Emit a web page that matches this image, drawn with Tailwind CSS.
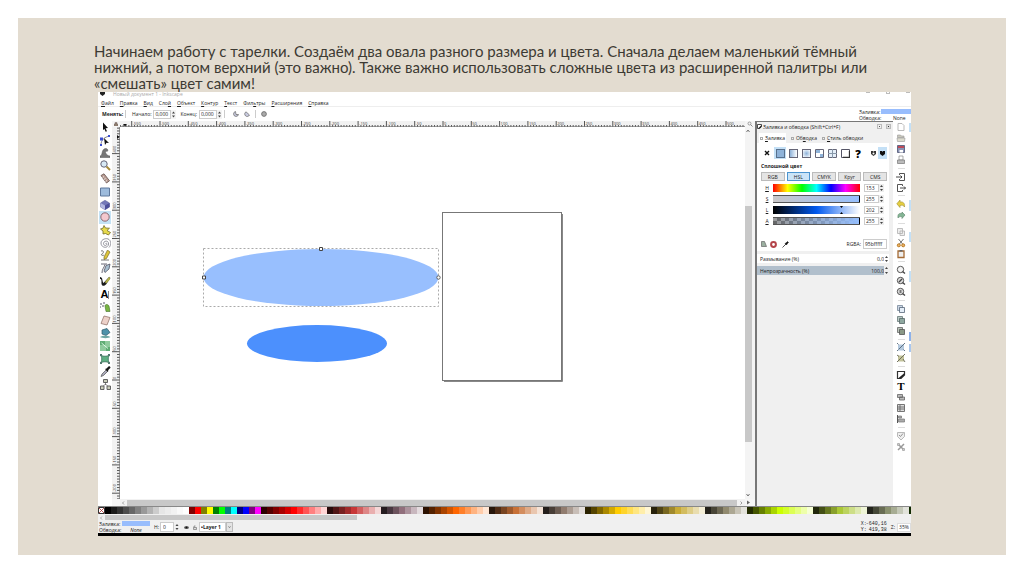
<!DOCTYPE html>
<html lang="ru">
    <head>
        <meta charset="UTF-8">
        <meta name="viewport" content="width=device-width, initial-scale=1.0">
        <title>Рисуем тарелку в Inkscape</title>
        <script src="https://cdn.jsdelivr.net/npm/@tailwindcss/browser@4"></script>
    </head>
    <body class="bg-white">
        <div class="flex min-h-screen p-[18px] pb-[19px]">
            <section class="flex min-w-0 flex-1 flex-col bg-[#e3dcd0] pt-[25px] pb-[19px] pl-20 pr-[95px]">

                <h1 class="-ml-1 mb-px whitespace-nowrap font-['Lato','Roboto',sans-serif] text-[15px] leading-[16px] text-[#3d3a33]">
                    Начинаем работу с тарелки. Создаём два овала разного размера и цвета. Сначала делаем маленький тёмный<br>
                    нижний, а потом верхний (это важно). Также важно использовать сложные цвета из расширенной палитры или<br>
                    «смешать» цвет самим!
                </h1>

                <!-- Inkscape window -->
                <div class="flex flex-1 flex-col overflow-hidden bg-white font-['Open_Sans','Noto_Sans',sans-serif] text-[5px] leading-[6px] text-[#1c1c1c]">

                    <!-- Title bar -->
                    <div class="flex h-[6px] items-start overflow-hidden pl-[2px] text-[#aaa]">
                        <svg class="mr-2 h-1 w-[5px]" viewBox="0 0 5 4"><path d="M0 0h5v2L2.500 4 0 2z" fill="#222"/></svg>
                        <span class="leading-[4px]">Новый документ 1 - Inkscape</span>
                        <div class="ml-auto flex gap-4 pr-px">
                            <span class="h-px w-1 bg-[#bbb]"></span>
                            <span class="h-[2px] w-1 border border-t-0 border-[#bbb]"></span>
                            <span class="h-px w-1 bg-[#bbb]"></span>
                        </div>
                    </div>

                    <!-- Menu -->
                    <nav class="flex h-[9px] items-center gap-[6px] border-b border-[#eee] pt-px pl-[3px]">
                        <a href="#"><u>Ф</u>айл</a>
                        <a href="#"><u>П</u>равка</a>
                        <a href="#"><u>В</u>ид</a>
                        <a href="#">Сло<u>й</u></a>
                        <a href="#"><u>О</u>бъект</a>
                        <a href="#"><u>К</u>онтур</a>
                        <a href="#"><u>Т</u>екст</a>
                        <a href="#">Фил<u>ь</u>тры</a>
                        <a href="#"><u>Р</u>асширения</a>
                        <a href="#"><u>С</u>правка</a>
                    </nav>

                    <!-- Tool options -->
                    <div class="flex h-[14px] items-center pl-1">
                        <b class="w-[23px]">Менять:</b>
                        <span class="mr-[6px] h-2 w-px bg-[#ccc]"></span>
                        <label for="start" class="mr-[2px]">Начало:</label>
                        <input id="start" value="0,000" class="h-[9px] w-[18px] border border-[#ccc] pl-px">
                        <svg class="mr-1 h-[9px] w-[5px] bg-[#f4f4f4]" viewBox="0 0 5 9"><path d="M1 3.500 2.500 1.500 4 3.500zM1 5.500 2.500 7.500 4 5.500z" fill="#444"/></svg>
                        <label for="end" class="mr-[2px]">Конец:</label>
                        <input id="end" value="0,000" class="h-[9px] w-[18px] border border-[#ccc] pl-px">
                        <svg class="mr-[2px] h-[9px] w-[5px] bg-[#f4f4f4]" viewBox="0 0 5 9"><path d="M1 3.500 2.500 1.500 4 3.500zM1 5.500 2.500 7.500 4 5.500z" fill="#444"/></svg>
                        <span class="mr-2 h-2 w-px bg-[#ccc]"></span>
                        <button class="mr-[5px]" aria-label="Сектор"><svg class="size-[6px]" viewBox="0 0 6 6"><path d="M2.500.5A2.500 2.500 0 1 0 5.500 3.500H3z" fill="#c9cbe0" stroke="#666" stroke-width=".7"/></svg></button>
                        <button class="mr-[5px]" aria-label="Дуга"><svg class="size-[6px]" viewBox="0 0 6 6"><path d="M2 .8A2.500 2.500 0 1 0 5.500 4z" fill="#c9cbe0" stroke="#666" stroke-width=".7"/></svg></button>
                        <span class="mr-[5px] h-2 w-px bg-[#ccc]"></span>
                        <button aria-label="Целый эллипс"><svg class="size-[6px]" viewBox="0 0 6 6"><circle cx="3" cy="3" r="2.400" fill="#aaa" stroke="#666" stroke-width=".8"/></svg></button>
                        <div class="ml-auto grid grid-cols-[22px_30px] pt-px">
                            <span>Заливка:</span><span class="h-[5px] bg-[#98bdfd]"></span>
                            <span>Обводка:</span><span class="pl-3">None</span>
                        </div>
                    </div>

                    <div class="flex flex-1">

                        <!-- Toolbox -->
                        <div class="w-[14px]">
                            <div class="grid h-[270px] auto-rows-fr justify-items-center *:flex *:w-[12px] *:items-center *:justify-center">
                                <button aria-label="Выделение"><svg class="size-[10px]" viewBox="0 0 10 10"><path d="M3 .5 8 6 5.600 6.200 7 9.200 5.600 9.700 4.500 6.900 3 8z" fill="#111"/></svg></button>
                                <button aria-label="Узлы"><svg class="size-[11px]" viewBox="0 0 11 11"><path d="M1 10C1 5 4 2 10 1" fill="none" stroke="#667" stroke-width=".8"/><path d="M0 2.500h3v3H0zM8 0h2v2H8zM0 9h2v2H0z" fill="#3c4fd0"/><path d="M4 3l5 5-2.500-.2L5 10z" fill="#111"/></svg></button>
                                <button aria-label="Корректор"><svg class="size-[10px]" viewBox="0 0 10 10"><path d="M0 9.500V8c3 0 1-7 5.500-7.500C8 .5 8.500 3 7 3.500 5.500 2.500 5 4 6 5.500S8 8 10 8v1.500z" fill="#777" stroke="#555" stroke-width=".5"/></svg></button>
                                <button aria-label="Масштаб"><svg class="size-[11px]" viewBox="0 0 11 11"><path d="M6.500 6.500 10 10" stroke="#a88c3a" stroke-width="2"/><circle cx="4" cy="4" r="3.200" fill="#d7e9f5" stroke="#667" stroke-width="1"/></svg></button>
                                <button aria-label="Измеритель"><svg class="size-[11px]" viewBox="0 0 11 11"><path d="M1 2.500 4 .8l5.500 7L6.500 10z" fill="#b99c92" stroke="#65514d" stroke-width=".8"/><path d="M2.500 4.500 4 3.500M4 6.500l1.500-1M5.500 8.500 7 7.500" stroke="#fff" stroke-width=".7"/></svg></button>
                                <button aria-label="Прямоугольник"><svg class="size-[10px]" viewBox="0 0 10 10"><path d="M.5 1h9v8h-9z" fill="#9dbbdc" stroke="#5f789c"/></svg></button>
                                <button aria-label="Параллелепипед"><svg class="size-[10px]" viewBox="0 0 10 10"><path d="M5 .3 9.500 3v4L5 9.700.5 7V3z" fill="#7478b8" stroke="#6a6d9e" stroke-width=".6"/><path d="M.5 3 5 5.500v4.200L.5 7z" fill="#b4b8e0"/><path d="M5 5.500 9.500 3v4L5 9.700z" fill="#4d4f9a"/></svg></button>
                                <button aria-label="Эллипс" class="bg-[#c4e2f5]"><svg class="size-[10px]" viewBox="0 0 10 10"><circle cx="5" cy="5" r="4.200" fill="#f3c8ce" stroke="#7e6068" stroke-width=".9"/></svg></button>
                                <button aria-label="Звезда"><svg class="size-[11px]" viewBox="0 0 11 11"><path d="M4 .5 5.500 3l4 .2L7 5.500l3.500 2-2 2.500-3-1.500L3 9V6L.5 4 3 3.200z" fill="#e6d94b" stroke="#746c27" stroke-width=".8"/></svg></button>
                                <button aria-label="Спираль"><svg class="size-[11px]" viewBox="0 0 11 11"><path d="M5.500 5.500c1-1 2 .5 1 1.500S3.500 7.500 3.500 5.500 6 2.500 7.500 3.500s1.500 4-.5 5.300-6 0-6-3.800S6.500-.5 9 1.500s2 6 0 8" fill="none" stroke="#7c7c88" stroke-width=".8"/></svg></button>
                                <button aria-label="Карандаш"><svg class="size-[11px]" viewBox="0 0 11 11"><path d="M1 1c3-1 3 2 1 3s1 2 2 1M1 10h8" fill="none" stroke="#555" stroke-width=".8"/><path d="M7.500 0 10 2 6.500 8.500 4 9.500V7z" fill="#dcc43c" stroke="#6a5d22" stroke-width=".6"/></svg></button>
                                <button aria-label="Перо"><svg class="size-[11px]" viewBox="0 0 11 11"><path d="M1 1h6M2 10C2 6 4 5 5 1.500" fill="none" stroke="#445" stroke-width=".8"/><path d="M6 2.500 10 1 9 6 5 9.500 4 8z" fill="#a8bfd0" stroke="#445" stroke-width=".7"/></svg></button>
                                <button aria-label="Каллиграфия"><svg class="size-[11px]" viewBox="0 0 11 11"><path d="M0 1c3 0 2 4 3.500 6L9 1l1.500 1L6 8.500C3 11.500 1 9 1.500 6 1.500 3.500 1 3 0 3z" fill="#1c1c1c"/><path d="M9.500.5 5 6l1 1.500 4-4z" fill="#b8b64c"/></svg></button>
                                <button aria-label="Текст" class="font-['Liberation_Sans',sans-serif] text-[11px] font-bold leading-[11px] text-black">A<span class="h-2 w-px bg-[#888]"></span></button>
                                <button aria-label="Распылитель"><svg class="size-[11px]" viewBox="0 0 11 11"><path d="M0 2h2M2 4h2M3 1h2M0 5h1" stroke="#556" stroke-width="1"/><path d="M5 4c0-2 3-2 4 0l1 5.500H6z" fill="#79b443" stroke="#44702b" stroke-width=".6"/></svg></button>
                                <button aria-label="Ластик"><svg class="size-[11px]" viewBox="0 0 11 11"><path d="M4 1 10 2.500 7 10 1 8.500z" fill="#edd1c9" stroke="#96776f" stroke-width=".8"/></svg></button>
                                <button aria-label="Заливка"><svg class="size-[11px]" viewBox="0 0 11 11"><path d="M2 2 7 .5l3 4L6 7.500 2 6z" fill="#4e92aa" stroke="#31596a" stroke-width=".7"/><path d="M0 9c3-2 8-1.500 10.500 0-2 1.500-8 1.500-10.500 0z" fill="#6fa7a4"/></svg></button>
                                <button aria-label="Градиент"><svg class="size-[10px]" viewBox="0 0 10 10"><path d="M0 0h10v10H0z" fill="#8fca9d"/><path d="M0 0h5v4H0zM6 6h4v4H6z" fill="#5fac74"/><path d="M1.500 2 8 7.500" stroke="#eafff0" stroke-width=".9"/></svg></button>
                                <button aria-label="Сетка градиента"><svg class="size-[10px]" viewBox="0 0 10 10"><path d="M1 1.500c3 1 5 1 8 0-1 3-1 4 0 7-3-1-5-1-8 0 1-3 1-4 0-7z" fill="#5fb083" stroke="#3e725c" stroke-width=".8"/><path d="M0 0h2v2H0zM8 0h2v2H8zM0 8h2v2H0zM8 8h2v2H8z" fill="#557a70"/></svg></button>
                                <button aria-label="Пипетка"><svg class="size-[11px]" viewBox="0 0 11 11"><path d="M1 10.500 2 8l4-4 1.500 1.500-4 4z" fill="#aab" stroke="#555" stroke-width=".7"/><path d="M5 3l1.500-.5L8.500.5c1-.8 2.500.6 1.800 1.600l-2 2L8 6z" fill="#151515"/></svg></button>
                                <button aria-label="Соединительные линии"><svg class="size-[11px]" viewBox="0 0 11 11"><path d="M5.500 3v3M2.500 8 5.500 5l3 3" fill="none" stroke="#666" stroke-width=".8"/><path d="M3.500.5h4v3h-4zM.5 7h3.500v3.500H.5zM7 7h3.500v3.500H7z" fill="#c9cdb8" stroke="#555" stroke-width=".9"/></svg></button>
                            </div>
                        </div>

                        <!-- Rulers, canvas, scrollbars -->
                        <div class="grid flex-1 grid-cols-[8px_1fr_10px] grid-rows-[6px_1fr_7px]">
                            <div class="flex items-center justify-center bg-[#f6f6f6]"><svg class="size-1" viewBox="0 0 4 4"><path d="M0 2h4v2H0zM1 2V.5h2V2" fill="#987" stroke="#655" stroke-width=".4"/></svg></div>
                            <svg class="h-[6px] w-full bg-[#f2f2f2]" id="ruler-x"></svg>
                            <div class="flex justify-center bg-[#f6f6f6]"><svg class="size-[6px]" viewBox="0 0 6 6"><circle cx="2.500" cy="2.500" r="1.500" fill="none" stroke="#888" stroke-width=".8"/><path d="M3.500 3.500l2 2" stroke="#888"/></svg></div>

                            <svg class="h-full w-[8px] bg-[#f2f2f2]" id="ruler-y"></svg>
                            <svg class="h-full w-full">
                                <path d="M324 254.500h118.500V87" fill="none" stroke="#888"/>
                                <rect x="322.500" y="85.500" width="119" height="168" fill="#fff" stroke="#777"/>
                                <ellipse cx="201" cy="150.500" rx="117.500" ry="28.500" fill="#98bffe"/>
                                <ellipse cx="197" cy="216.500" rx="70" ry="18.500" fill="#4c90fd"/>
                                <rect x="83.500" y="121.500" width="235" height="58" fill="none" stroke="#aaa" stroke-dasharray="2 2"/>
                                <path d="M199.500 120.500h3v3h-3zM82.500 149h3v3h-3z" fill="#fff" stroke="#444"/>
                                <circle cx="318.500" cy="150.500" r="1.700" fill="#fff" stroke="#444" stroke-width=".8"/>
                            </svg>
                            <div class="flex flex-col items-start bg-[#f4f4f4]">
                                <svg class="h-2 w-[6px]" viewBox="0 0 6 8"><path d="M1.500 5 3 3l1.500 2" fill="none" stroke="#666" stroke-width=".9"/></svg>
                                <div class="mt-[71px] h-[236px] w-[7px] bg-[#c8c8c8]"></div>
                                <svg class="mt-auto h-2 w-[6px]" viewBox="0 0 6 8"><path d="M1.500 3 3 5l1.500-2" fill="none" stroke="#666" stroke-width=".9"/></svg>
                            </div>

                            <div class="bg-[#f6f6f6]"></div>
                            <div class="flex items-center bg-[#f2f2f2]">
                                <svg class="h-[6px] w-[7px]" viewBox="0 0 7 6"><path d="M4 1.500 2.500 3 4 4.500" fill="none" stroke="#888" stroke-width=".8"/></svg>
                                <div class="h-[6px] flex-1 bg-[#c8c8c8]"></div>
                                <svg class="h-[6px] w-[8px]" viewBox="0 0 8 6"><path d="M3.500 1.500 5 3 3.500 4.500" fill="none" stroke="#888" stroke-width=".8"/></svg>
                            </div>
                            <div class="flex items-center bg-[#f6f6f6] pl-px"><svg class="size-[5px]" viewBox="0 0 5 5"><path d="M1 .5 4 2.500 1 4.500z" fill="#666"/></svg></div>
                        </div>

                        <!-- Fill and stroke dialog -->
                        <div class="w-[138px] border-t border-l-2 border-[#777] bg-[#f0f0f0]">
                            <div class="flex h-[9px] items-center pr-[2px]">
                                <svg class="mr-px size-[5px]" viewBox="0 0 5 5"><path d="M.5.5h4v2l-2 2h-2z" fill="#fff" stroke="#222" stroke-width=".8"/><path d="M4.500 1v2L3 4.500H1z" fill="#222"/></svg>
                                <span>Заливка и обводка (Shift+Ctrl+F)</span>
                                <button class="ml-auto mr-1 flex size-[5px] items-center justify-center border border-[#bbb]" aria-label="Свернуть"><span class="size-px bg-[#555]"></span></button>
                                <button class="flex size-[5px] items-center justify-center border border-[#bbb] bg-[#ddd]" aria-label="Закрыть"><span class="size-px bg-[#333]"></span></button>
                            </div>

                            <div class="mt-[2px] flex h-[10px] items-center gap-[5px] pl-[2px]">
                                <button class="flex h-full items-center gap-[2px] bg-white px-px"><span class="size-[3px] border border-[#aaa]"></span><span><u>З</u>аливка</span></button>
                                <button class="flex items-center gap-[2px]"><span class="size-[3px] border border-[#aaa]"></span><span>Об<u>в</u>одка</span></button>
                                <button class="flex items-center gap-[2px]"><span class="size-[3px] border border-[#aaa]"></span><span><u>С</u>тиль обводки</span></button>
                            </div>

                            <div class="mr-1 bg-white pb-[2px] pl-1 pr-[2px]">
                                <div class="flex h-[20px] items-center">
                                    <div class="flex items-center gap-px *:flex *:h-[12px] *:w-[12px] *:items-center *:justify-center">
                                        <button aria-label="Нет заливки"><svg class="size-[6px]" viewBox="0 0 6 6"><path d="M1 1l4 4M5 1 1 5" stroke="#111" stroke-width="1.400"/></svg></button>
                                        <button aria-label="Сплошной цвет" class="bg-[#c4e0f6]"><span class="size-[9px] border border-[#58708c] bg-[#8fb3d9]"></span></button>
                                        <button aria-label="Линейный градиент"><span class="size-[9px] border border-[#667] bg-linear-to-r from-[#8fb3d9] to-white"></span></button>
                                        <button aria-label="Радиальный градиент"><span class="size-[9px] border border-[#667] bg-radial from-[#8fb3d9] to-white"></span></button>
                                        <button aria-label="Сетка"><svg class="size-[9px]" viewBox="0 0 9 9"><path d="M.5.5h8v8h-8z" fill="#fff" stroke="#667"/><path d="M1 1h4v3H1zM5 5h3v3H5z" fill="#8fb3d9"/></svg></button>
                                        <button aria-label="Текстура"><svg class="size-[9px]" viewBox="0 0 9 9"><path d="M.5.5h8v8h-8z" fill="#e5eff9" stroke="#667"/><path d="M4.500 0v9M0 4.500h9" stroke="#89a"/></svg></button>
                                        <button aria-label="Образец"><svg class="size-[9px]" viewBox="0 0 9 9"><path d="M.5.5h8v8h-8z" fill="#fff" stroke="#556"/><path d="M8.500 2v6.500H2" fill="none" stroke="#333" stroke-width="1.300"/></svg></button>
                                        <button aria-label="Не определено" class="text-[11px] font-extrabold leading-[11px] text-black">?</button>
                                    </div>
                                    <div class="ml-auto flex items-center *:flex *:h-[12px] *:w-[9px] *:items-center *:justify-center">
                                        <button aria-label="Чёт-нечет"><svg class="size-[5px]" viewBox="0 0 5 5"><path d="M0 0h2l.5 1L3 0h2v3L2.500 5 0 3z" fill="#333"/><circle cx="2.500" cy="2.500" r="1" fill="#fff"/></svg></button>
                                        <button aria-label="Ненулевое" class="bg-[#c4e0f6]"><svg class="size-[5px]" viewBox="0 0 5 5"><path d="M0 0h2l.5 1L3 0h2v3L2.500 5 0 3z" fill="#111"/></svg></button>
                                    </div>
                                </div>
                                <b class="mb-[3px] block">Сплошной цвет</b>
                                <div class="mb-[3px] grid grid-cols-5 gap-[2px] *:h-[9px] *:border *:border-[#bbb] *:bg-[#e4e4e4]">
                                    <button>RGB</button>
                                    <button class="border-[#4b94cf]! bg-[#cbe4f7]!">HSL</button>
                                    <button>CMYK</button>
                                    <button>Круг</button>
                                    <button>CMS</button>
                                </div>

                                <div class="grid grid-cols-[12px_1fr_20px] items-center gap-y-[3px] pr-[3px]">
                                    <label for="h" class="text-center"><u>H</u></label>
                                    <div class="mr-1 h-2 bg-[linear-gradient(to_right,#f00,#ff0,#0f0,#0ff,#00f,#f0f,#f00)]"></div>
                                    <div class="flex h-2"><input id="h" value="153" class="h-2 w-[15px] border border-[#ccc] pl-px leading-[6px]"><svg class="h-2 w-[5px] bg-[#eee]" viewBox="0 0 5 8"><path d="M1 3 2.500 1 4 3zM1 5 2.500 7 4 5z" fill="#444"/></svg></div>

                                    <label for="s" class="text-center"><u>S</u></label>
                                    <div class="mr-1 flex h-2 justify-end border-y border-[#555] bg-linear-to-r from-[#cac7c7] to-[#95bfff]"><span class="w-px bg-black"></span></div>
                                    <div class="flex h-2"><input id="s" value="255" class="h-2 w-[15px] border border-[#ccc] pl-px leading-[6px]"><svg class="h-2 w-[5px] bg-[#eee]" viewBox="0 0 5 8"><path d="M1 3 2.500 1 4 3zM1 5 2.500 7 4 5z" fill="#444"/></svg></div>

                                    <label for="l" class="text-center"><u>L</u></label>
                                    <div class="mr-1 flex h-2 justify-end bg-[linear-gradient(to_right,#000,#0058ee_50%,#fff)] pr-[17px]"><svg class="h-2 w-[3px]" viewBox="0 0 3 8"><path d="M0 0h3L1.500 2zM0 8h3L1.500 6z" fill="#000"/></svg></div>
                                    <div class="flex h-2"><input id="l" value="202" class="h-2 w-[15px] border border-[#ccc] pl-px leading-[6px]"><svg class="h-2 w-[5px] bg-[#eee]" viewBox="0 0 5 8"><path d="M1 3 2.500 1 4 3zM1 5 2.500 7 4 5z" fill="#444"/></svg></div>

                                    <label for="a" class="text-center"><u>A</u></label>
                                    <div class="mr-1 h-2 bg-[conic-gradient(#666_25%,#999_0_50%,#666_0_75%,#999_0)] bg-size-[8px_8px]"><div class="flex h-2 justify-end border-y border-[#555] bg-linear-to-r from-transparent to-[#95bfff]"><span class="w-px bg-black"></span></div></div>
                                    <div class="flex h-2"><input id="a" value="255" class="h-2 w-[15px] border border-[#ccc] pl-px leading-[6px]"><svg class="h-2 w-[5px] bg-[#eee]" viewBox="0 0 5 8"><path d="M1 3 2.500 1 4 3zM1 5 2.500 7 4 5z" fill="#444"/></svg></div>
                                </div>

                                <div class="mt-[14px] flex items-center">
                                    <svg class="mr-[3px] size-[6px]" viewBox="0 0 6 6"><path d="M.5.5h3l2 5h-5z" fill="#9bb0a0" stroke="#666" stroke-width=".7"/></svg>
                                    <svg class="mr-[5px] size-[7px]" viewBox="0 0 7 7"><circle cx="3.500" cy="3.500" r="2.400" fill="#fff" stroke="#b34449" stroke-width="2"/></svg>
                                    <button aria-label="Пипетка"><svg class="size-[7px]" viewBox="0 0 7 7"><path d="M.5 6.500 4 3" stroke="#555"/><path d="M3 2.500 4 2 5.500.5l1 1L5 3l-.5 1z" fill="#111" stroke="#111" stroke-width=".5"/></svg></button>
                                    <label for="rgba" class="ml-auto mr-[2px]">RGBA:</label>
                                    <input id="rgba" value="95bfffff" class="h-[10px] w-[24px] border border-[#ccc] pl-px">
                                </div>
                            </div>

                            <div class="mt-[3px] mr-1 flex h-[9px] items-center bg-white pl-[3px]">
                                <label for="blur">Размывание (%)</label>
                                <input id="blur" value="0,0" class="ml-auto w-4 text-right leading-[6px]">
                                <svg class="h-2 w-[5px]" viewBox="0 0 5 8"><path d="M1 3 2.500 1 4 3zM1 5 2.500 7 4 5z" fill="#444"/></svg>
                            </div>
                            <div class="mt-[3px] mr-1 flex h-[9px] items-center bg-[#b1bfcc] pl-[3px]">
                                <label for="opacity">Непрозрачность (%)</label>
                                <input id="opacity" value="100,0" class="ml-auto w-4 text-right leading-[6px]">
                                <svg class="h-[9px] w-[5px] bg-[#f0f0f0]" viewBox="0 0 5 9"><path d="M1 3 2.500 1 4 3zM1 6 2.500 8 4 6z" fill="#444"/></svg>
                            </div>
                        </div>

                        <!-- Commands bar -->
                        <div class="relative w-[18px]">
                            <div class="flex h-[331px] flex-col items-center justify-between pr-[2px] pt-px *:shrink-0">
                                <button aria-label="Создать"><svg class="size-[10px]" viewBox="0 0 10 10"><path d="M2 1.500h4L8 3.500v5H2z" fill="#fff" stroke="#aaa" stroke-width=".8"/></svg></button>
                                <button aria-label="Открыть"><svg class="size-[10px]" viewBox="0 0 10 10"><path d="M1.500 2h3l1 1H8v1.500H1.500z" fill="#c9c8bc" stroke="#999" stroke-width=".6"/><path d="M1 5h8l-.5 3.500H1.500z" fill="#dddccf" stroke="#999" stroke-width=".6"/></svg></button>
                                <button aria-label="Сохранить"><svg class="size-[10px]" viewBox="0 0 10 10"><path d="M1.500 1.500h7v7h-7z" fill="#8a94b5" stroke="#4b5270" stroke-width=".8"/><path d="M2 2h6v2H2z" fill="#bc4b59"/><path d="M3.500 6h3.500v2.500H3.500z" fill="#fff"/></svg></button>
                                <button aria-label="Печать"><svg class="size-[10px]" viewBox="0 0 10 10"><path d="M3 1h4v4H3z" fill="#fff" stroke="#888" stroke-width=".7"/><path d="M1.500 5h7v3.500h-7z" fill="#bbb" stroke="#777" stroke-width=".7"/></svg></button>
                                <span class="flex h-1 w-[7px] items-center"><span class="h-px w-full bg-[#ddd]"></span></span>
                                <button aria-label="Импорт"><svg class="size-[10px]" viewBox="0 0 10 10"><path d="M3.500 3V1.500h5v7h-5V7" fill="none" stroke="#555"/><path d="M0 5h6M4.500 3.500 6 5 4.500 6.500" fill="none" stroke="#333" stroke-width=".9"/></svg></button>
                                <button aria-label="Экспорт"><svg class="size-[10px]" viewBox="0 0 10 10"><path d="M6.500 3V1.500h-5v7h5V7" fill="none" stroke="#555"/><path d="M4 5h5.500M8 3.500 9.500 5 8 6.500" fill="none" stroke="#333" stroke-width=".9"/></svg></button>
                                <span class="flex h-1 w-[7px] items-center"><span class="h-px w-full bg-[#ddd]"></span></span>
                                <button aria-label="Отменить"><svg class="size-[10px]" viewBox="0 0 10 10"><path d="M4 1v2c3-.5 5 1 4.500 5C7.500 6 6 6 4 6.500V8.500L.8 4.800z" fill="#e5cf42" stroke="#a08d2a" stroke-width=".6"/></svg></button>
                                <button aria-label="Повторить"><svg class="size-[10px]" viewBox="0 0 10 10"><path d="M6 2v1.500C3 3 1.500 4 2 8c1-1.500 2.500-1.500 4-1.300V8.500L9 5z" fill="#83b594" stroke="#598168" stroke-width=".6"/></svg></button>
                                <span class="flex h-1 w-[7px] items-center"><span class="h-px w-full bg-[#ddd]"></span></span>
                                <button aria-label="Скопировать"><svg class="size-[10px]" viewBox="0 0 10 10"><path d="M1.500 1.500h5v5h-5zM4 4h4.500v4.500H4z" fill="#eee" stroke="#b0b0b0" stroke-width=".8"/></svg></button>
                                <button aria-label="Вырезать"><svg class="size-[10px]" viewBox="0 0 10 10"><path d="M2.500 1 7 6.500M7.500 1 3 6.500" stroke="#666" stroke-width=".9"/><circle cx="2.800" cy="7.300" r="1.500" fill="#edb467" stroke="#b97c28"/><circle cx="7.200" cy="7.300" r="1.500" fill="#edb467" stroke="#b97c28"/></svg></button>
                                <button aria-label="Вставить"><svg class="size-[10px]" viewBox="0 0 10 10"><path d="M2 2h6v6.500H2z" fill="#eee" stroke="#a56b35" stroke-width="1.300"/><path d="M3.500 1h3v1.500h-3z" fill="#666"/></svg></button>
                                <span class="flex h-1 w-[7px] items-center"><span class="h-px w-full bg-[#ddd]"></span></span>
                                <button aria-label="Выделение в окне"><svg class="size-[10px]" viewBox="0 0 10 10"><circle cx="4.500" cy="4.500" r="3.200" fill="#f4f4f4" stroke="#555"/><path d="M6.500 6.500 9 8.500" stroke="#444" stroke-width="1.500"/></svg></button>
                                <button aria-label="Рисунок в окне"><svg class="size-[10px]" viewBox="0 0 10 10"><circle cx="4.500" cy="4.500" r="3.200" fill="#ddd" stroke="#555"/><path d="M3 6l3-3M6.500 6.500 9 8.500" stroke="#444" stroke-width="1.400"/></svg></button>
                                <button aria-label="Страница в окне"><svg class="size-[10px]" viewBox="0 0 10 10"><circle cx="4.500" cy="4.500" r="3.200" fill="#ddd" stroke="#555"/><path d="M3.500 3h2v3h-2z" fill="#777"/><path d="M6.500 6.500 9 8.500" stroke="#444" stroke-width="1.400"/></svg></button>
                                <span class="flex h-1 w-[7px] items-center"><span class="h-px w-full bg-[#ddd]"></span></span>
                                <button aria-label="Дублировать"><svg class="size-[10px]" viewBox="0 0 10 10"><path d="M1.500 1.500h5v5h-5z" fill="#ccd7e5" stroke="#789" stroke-width=".8"/><path d="M3.500 3.500h5v5h-5z" fill="#e4edf7" stroke="#567" stroke-width=".8"/></svg></button>
                                <button aria-label="Клонировать"><svg class="size-[10px]" viewBox="0 0 10 10"><path d="M1.500 1.500h5v5h-5z" fill="#b9c9c4" stroke="#677" stroke-width=".8"/><path d="M3.500 3.500h5v5h-5z" fill="#8fa8a0" stroke="#566" stroke-width=".8"/></svg></button>
                                <button aria-label="Отсоединить клон"><svg class="size-[10px]" viewBox="0 0 10 10"><path d="M1.500 1.500h5v5h-5z" fill="#b9c4b9" stroke="#666" stroke-width=".8"/><path d="M3.500 3.500h5v5h-5z" fill="#8b9987" stroke="#555" stroke-width=".8"/></svg></button>
                                <span class="flex h-1 w-[7px] items-center"><span class="h-px w-full bg-[#ddd]"></span></span>
                                <button aria-label="Сгруппировать"><svg class="size-[10px]" viewBox="0 0 10 10"><path d="M2 2.500h6v6H2z" fill="#b4c9de"/><path d="M1 1l1.500 1.500M9 1 3 7M1 9l1.500-1.500M9 9 7.500 7.500" stroke="#567" stroke-width=".9"/></svg></button>
                                <button aria-label="Разгруппировать"><svg class="size-[10px]" viewBox="0 0 10 10"><path d="M2 2.500h6v6H2z" fill="#c3c39a"/><path d="M1 2l2 1.500M9 1 3 7M1 9l2-2M9 9 7 6" stroke="#665" stroke-width=".9"/></svg></button>
                                <span class="flex h-1 w-[7px] items-center"><span class="h-px w-full bg-[#ddd]"></span></span>
                                <button aria-label="Заливка и обводка"><svg class="size-[10px]" viewBox="0 0 10 10"><path d="M1.500 1.500h7V5L5 8.500H1.500z" fill="#fff" stroke="#333" stroke-width="1.200"/><path d="M8.500 3v2L5 8.500H2z" fill="#222"/></svg></button>
                                <button aria-label="Текст и шрифт" class="flex size-[10px] items-center justify-center font-['Liberation_Serif',serif] text-[11px] font-bold leading-[10px] text-black">T</button>
                                <button aria-label="Слои"><svg class="size-[10px]" viewBox="0 0 10 10"><path d="M1.500 2.500h5v3h-5zM3.500 5h5v3h-5z" fill="#bbb" stroke="#666" stroke-width=".8"/></svg></button>
                                <button aria-label="Редактор XML"><svg class="size-[10px]" viewBox="0 0 10 10"><path d="M1.500 1.500h7v7h-7zM1.500 4h7M1.500 6h7M4 2v6" fill="#ddd" stroke="#666" stroke-width=".9"/></svg></button>
                                <button aria-label="Выровнять"><svg class="size-[10px]" viewBox="0 0 10 10"><path d="M1.500 1v8" stroke="#555"/><path d="M2.500 2h3v2h-3zM2.500 5h6v3h-6z" fill="#aaa" stroke="#777" stroke-width=".7"/></svg></button>
                                <span class="flex h-1 w-[7px] items-center"><span class="h-px w-full bg-[#ddd]"></span></span>
                                <button aria-label="Настройки"><svg class="size-[10px]" viewBox="0 0 10 10"><path d="M1.500 1.500h7v4L5 9 1.500 5.500z" fill="#eee" stroke="#aaa" stroke-width=".8"/><path d="M3 4l1.500 1.500L7 2.500" fill="none" stroke="#888" stroke-width=".9"/></svg></button>
                                <button aria-label="Параметры документа"><svg class="size-[10px]" viewBox="0 0 10 10"><path d="M2 2l6 6M8 2 2 8" stroke="#999" stroke-width="1.500"/><path d="M1.500 1.500h2v2h-2zM6.500 6.500h2v2h-2z" fill="#ccc" stroke="#999" stroke-width=".6"/></svg></button>
                            </div>
                            <!-- snap bar, cut off by the window edge -->
                            <div class="absolute top-0 right-0 flex w-[2px] flex-col">
                                <span class="mt-[2px] h-[9px] bg-[#c4e0f6]"></span>
                                <span class="mt-[68px] h-[11px] bg-[#c4e0f6]"></span>
                                <span class="mt-[21px] h-[10px] bg-[#c4e0f6]"></span>
                                <span class="mt-[29px] h-[11px] bg-[#c4e0f6]"></span>
                                <span class="mt-[50px] h-[9px] bg-[#8eb2ea]"></span>
                                <span class="mt-[3px] h-2 bg-[#a9c7ee]"></span>
                            </div>
                        </div>
                    </div>

                    <!-- Palette -->
                    <div class="flex h-2 overflow-hidden border-t border-[#888]" id="palette">
                        <svg class="h-[7px] w-[7px] shrink-0 bg-white" viewBox="0 0 7 7"><path d="M.5.5h6v6h-6z" fill="none" stroke="#333"/><path d="M1 1l5 5M6 1 1 6" stroke="#a33" stroke-width=".8"/></svg>
                    </div>
                    <div class="flex h-[7px] items-center bg-[#f0f0f0]">
                        <svg class="h-[6px] w-[7px]" viewBox="0 0 7 6"><path d="M4 1.500 2.500 3 4 4.500" fill="none" stroke="#999" stroke-width=".8"/></svg>
                        <div class="h-[5px] w-[31%] bg-[#c8c8c8]"></div>
                    </div>

                    <!-- Status bar -->
                    <div class="flex h-[12px] items-center bg-[#f0f0f0]">
                        <div class="mr-1 grid grid-cols-[23px_28px] pl-px">
                            <span>Заливка:</span><span class="h-[5px] bg-[#98bdfd]"></span>
                            <span>Обводка:</span><i class="text-center">None</i>
                        </div>
                        <label for="stroke-opacity" class="mr-px">Н:</label>
                        <input id="stroke-opacity" value="0" class="h-[10px] w-[14px] border border-[#ccc] bg-white pl-[2px]">
                        <svg class="mr-1 h-[10px] w-[6px]" viewBox="0 0 6 10"><path d="M1.500 4 3 2l1.500 2zM1.500 6 3 8l1.500-2z" fill="#444"/></svg>
                        <svg class="mr-1 h-[5px] w-[5px]" viewBox="0 0 5 5"><ellipse cx="2.500" cy="2.500" rx="2.400" ry="1.500" fill="#555"/><circle cx="2.500" cy="2.500" r=".8" fill="#111"/></svg>
                        <svg class="mr-[2px] h-[5px] w-1" viewBox="0 0 4 5"><path d="M.5 2.500h3v2h-3zM1 2.500V1h1.500" fill="#ddd" stroke="#777" stroke-width=".7"/></svg>
                        <select aria-label="Текущий слой" class="h-[10px] w-[27px] appearance-none border border-[#ccc] bg-white pl-px text-[5px] font-bold leading-[6px]"><option>•Layer 1</option></select>
                        <svg class="h-[10px] w-[7px] border border-[#bbb] bg-[#e4e4e4]" viewBox="0 0 7 10"><path d="M2 4l1.500 2L5 4" fill="none" stroke="#555" stroke-width=".8"/></svg>
                        <div class="ml-auto mr-1 grid grid-cols-[5px_auto] text-right font-['Liberation_Mono',monospace]">
                            <span>X:</span><span>-640,16</span>
                            <span>Y:</span><span>419,38</span>
                        </div>
                        <label for="zoom" class="mr-[2px]">Z:</label>
                        <input id="zoom" value="35%" class="h-[9px] w-[14px] border border-[#ddd] bg-white text-center">
                    </div>
                    <div class="h-[3px] bg-black"></div>
                </div>
            </section>
        </div>
    </body>
    <script>
        const palette = `000000 1a1a1a 333333 4d4d4d 666666 808080 999999 b3b3b3 cccccc e6e6e6 ececec f2f2f2 f9f9f9 ffffff
            800000 ff0000 808000 ffff00 008000 00ff00 008080 00ffff 000080 0000ff 800080 ff00ff
            2b0000 550000 800000 aa0000 d40000 ff0000 ff2a2a ff5555 ff8080 ffaaaa ffd5d5
            280b0b 501616 782121 a02c2c c83737 d35f5f de8787 e9afaf f4d7d7
            241c1f 483740 6c535d 916f7c ac939d c8b7be e3dbde
            2b1100 552200 803300 aa4400 d45500 ff6600 ff7f2a ff9955 ffb380 ffccaa ffe6d5
            28170b 502d16 784421 a05a2c c87137 d38d5f deaa87 e9c6af f4e3d7
            241f1c 483e37 6c5d53 917c6f ac9d93 c8beb7 e3dedb
            2b2200 554400 806600 aa8800 d4aa00 ffcc00 ffd42a ffdd55 ffe680 ffeeaa fff6d5
            28220b 504416 786721 a0892c c8ab37 d3bc5f decd87 e9ddaf f4eed7
            24221c 484537 6c6753 918a6f aca793 c8c4b7 e3e2db
            222b00 445500 668000 88aa00 aad400 ccff00 d4ff2a ddff55 e5ff80 eeffaa f6ffd5
            22280b 445016 677821 89a02c abc837 bcd35f cdde87 dde9af eef4d7
            23241c 454837 686c53 8a916f a7ac93 c4c8b7 e2e3db 112b00`.split(/\s+/);
        document.getElementById('palette').insertAdjacentHTML('beforeend',
            palette.map(c => `<span class="w-[6px] shrink-0" style="background:#${c}"></span>`).join(''));

        // 50 mm on the page is 28.3 px at this zoom, one tick every 5 mm
        const tick = 2.83;
        const rulerX = document.getElementById('ruler-x');
        const rulerY = document.getElementById('ruler-y');

        function drawRulers() {
            const width = rulerX.getBoundingClientRect().width;
            const height = rulerY.getBoundingClientRect().height;
            let x = '', y = '';
            for (let i = Math.ceil(-323 / tick); 323 + i * tick < width; i++) {
                const px = 323 + i * tick, major = i % 10 === 0;
                x += `<path d="M${px} ${major ? 0 : 4}V6" stroke="#444" stroke-width=".9"/>`;
                if (major && px < width - 12) x += `<text x="${px + 1}" y="4" font-size="4" fill="#444">${i * 5}</text>`;
            }
            for (let i = Math.ceil((253 - height) / tick); 253 - i * tick > 0; i++) {
                const py = 253 - i * tick, major = i % 10 === 0;
                y += `<path d="M${major ? 0 : 5} ${py}H8" stroke="#444" stroke-width=".9"/>`;
                if (major && py > 12) y += `<text transform="translate(4 ${py - 1}) rotate(-90)" font-size="4" fill="#444">${i * 5}</text>`;
            }
            rulerX.innerHTML = x + '<path d="M0 5.500H2000" stroke="#777" stroke-width=".7"/><path d="M3 3h4L5 5.500z" fill="#111"/>';
            rulerY.innerHTML = y + '<path d="M7.500 0V2000" stroke="#777" stroke-width=".7"/><path d="M5 8v4l2.500-2z" fill="#111"/>';
        }

        drawRulers();
        window.addEventListener('load', drawRulers);
        new ResizeObserver(drawRulers).observe(rulerX);
        new ResizeObserver(drawRulers).observe(rulerY);
    </script>
</html>
